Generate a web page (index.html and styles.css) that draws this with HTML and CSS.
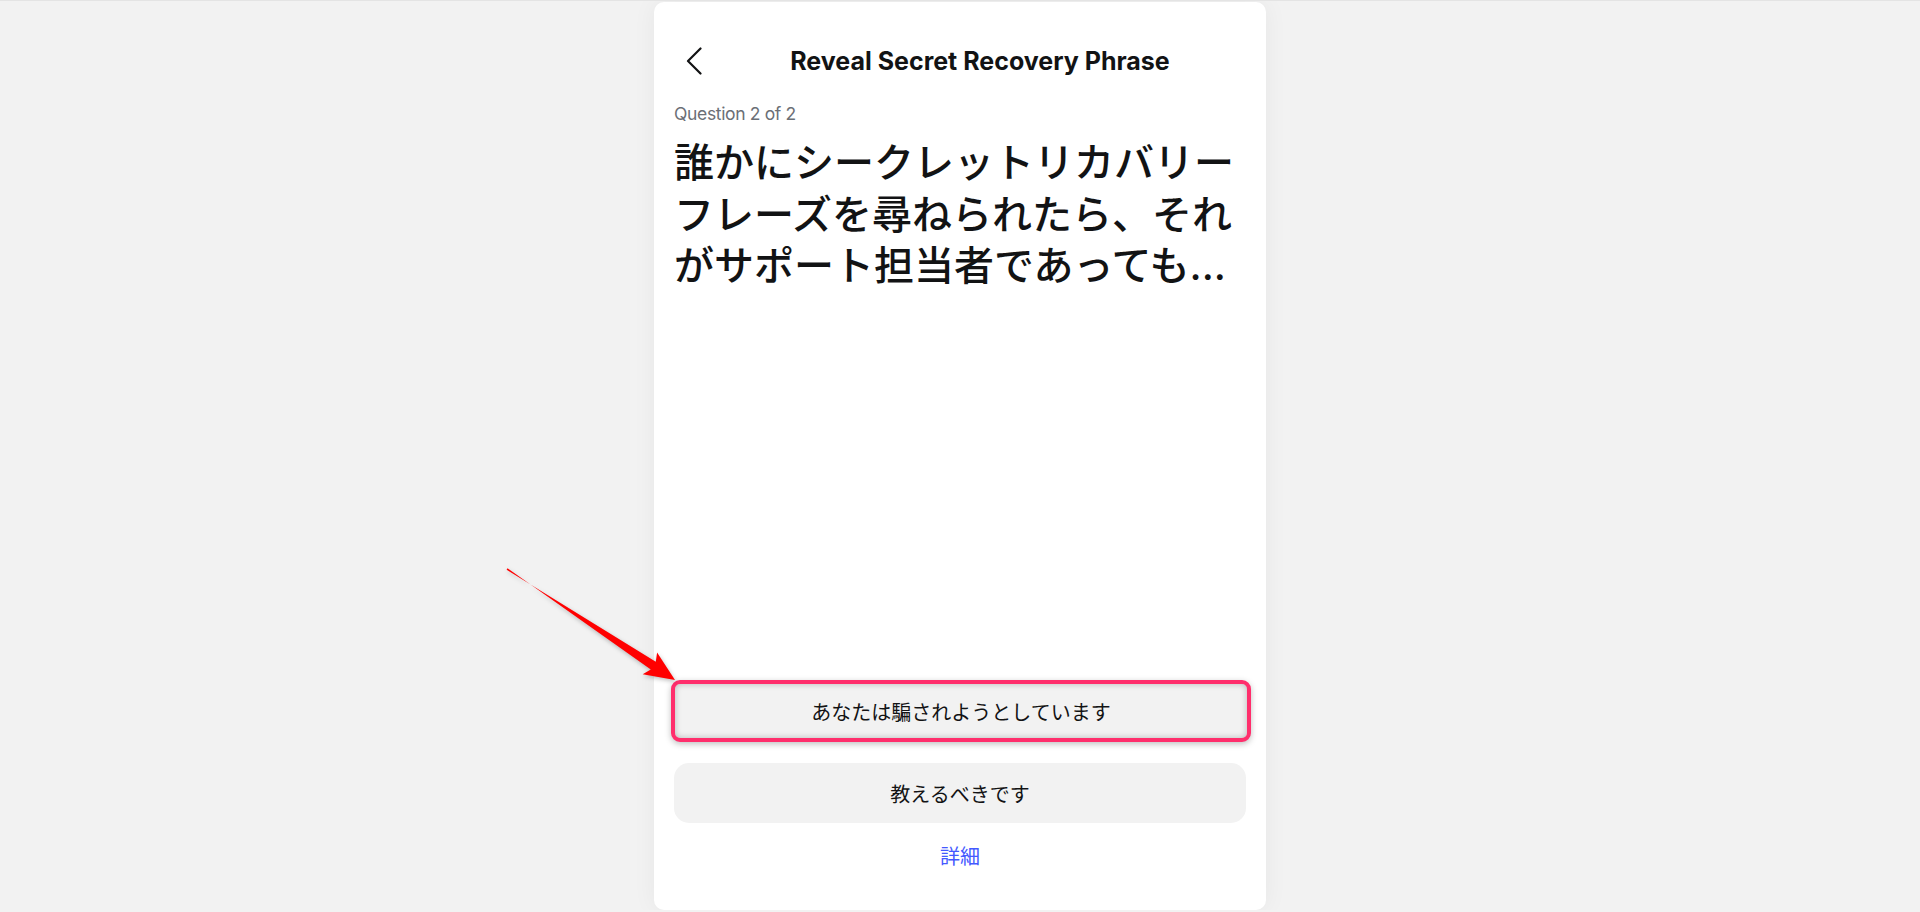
FILE: index.html
```html
<!DOCTYPE html>
<html lang="ja">
<head>
  <meta charset="UTF-8" />
  <meta name="viewport" content="width=device-width, initial-scale=1.0"/>
  <title>Reveal Secret Recovery Phrase</title>
  <link rel="stylesheet" href="styles.css">
</head>
<body>
  <div class="card">
    <div class="header">
      <button class="back" type="button" aria-label="Back">
        <svg width="16" height="28" viewBox="0 0 16 28">
          <path d="M14.5 1.5 L2 14 L14.5 26.5" fill="none" stroke="#121314" stroke-width="2.2" stroke-linecap="round" stroke-linejoin="round"/>
        </svg>
      </button>
      <h1 class="title">Reveal Secret Recovery Phrase</h1>
    </div>

    <p class="step">Question 2 of 2</p>
    <h2 class="question">誰かにシークレットリカバリーフレーズを尋ねられたら、それがサポート担当者であっても...</h2>

    <div class="actions">
      <button class="answer marked" type="button">あなたは騙されようとしています</button>
      <button class="answer" type="button">教えるべきです</button>
      <a class="more" href="#">詳細</a>
    </div>
  </div>

  <svg class="arrow" width="200" height="130" viewBox="500 560 200 130">
    <polygon points="506.6,569.7 655.8,661.8 657.1,652.5 675,680 642.7,674.3 650.8,669.4 507.5,568.3" fill="#ff0000"/>
  </svg>
</body>
</html>
```

FILE: styles.css
```css
body {
  margin: 0;
  background: #f2f2f2;
  border-top: 1px solid #e4e4e4;
  font-family: Inter, "Noto Sans CJK JP", sans-serif;
  color: #121314;
}
.card {
  width: 612px;
  height: 908px;
  margin: 1px auto 0;
  box-sizing: border-box;
  padding: 29px 20px 38px;
  background: #fff;
  border-radius: 10px;
  box-shadow: 0 0 24px rgba(0,0,0,0.05);
  display: flex;
  flex-direction: column;
}
.header {
  display: flex;
  align-items: center;
  height: 60px;
}
.back {
  width: 40px;
  height: 40px;
  padding: 0;
  border: none;
  background: none;
  display: flex;
  align-items: center;
  justify-content: center;
  cursor: pointer;
}
.title {
  flex: 1;
  margin: 0;
  text-align: center;
  font-size: 25px;
  font-weight: 700;
  letter-spacing: 0;
}
.step {
  margin: 10px 0 0;
  font-size: 17.5px;
  line-height: 25px;
  letter-spacing: -0.35px;
  color: #6b6f76;
}
.question {
  margin: 11px 0 0;
  font-size: 40px;
  line-height: 51.5px;
  font-weight: 500;
}
.actions {
  margin-top: auto;
  display: flex;
  flex-direction: column;
}
.answer {
  height: 60px;
  border: none;
  border-radius: 15px;
  background: #f2f2f2;
  font-family: inherit;
  font-size: 20px;
  font-weight: 400;
  color: #121314;
  cursor: pointer;
}
.marked {
  height: 62px;
  margin: 0 -5px 21px -3px;
  border: 4px solid #ff2e6c;
  border-radius: 9px;
  box-shadow: 0 2px 6px rgba(0,0,0,0.25), inset 0 0 6px rgba(0,0,0,0.25);
}
.more {
  margin-top: 19px;
  text-align: center;
  font-size: 20px;
  line-height: 30px;
  font-weight: 400;
  color: #4459ff;
  text-decoration: none;
}
.arrow {
  position: absolute;
  left: 500px;
  top: 560px;
  filter: drop-shadow(1px 2px 2px rgba(0,0,0,0.25));
}
```
